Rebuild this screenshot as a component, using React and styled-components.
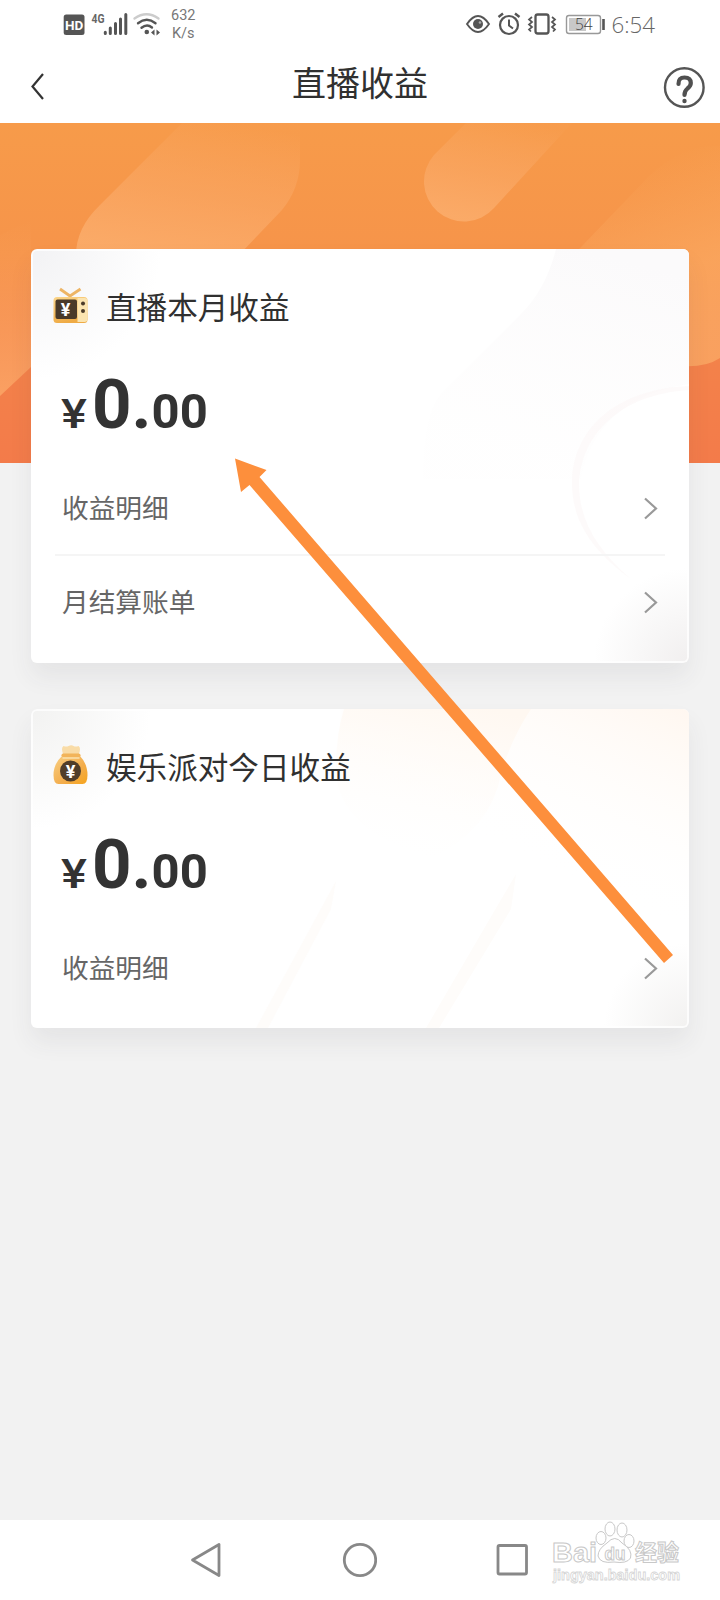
import styled, { createGlobalStyle } from "styled-components";

const GlobalStyle = createGlobalStyle`
  * {
    box-sizing: border-box;
  }
  body {
    margin: 0;
    background: #f2f2f2;
    font-family: Roboto, "Noto Sans CJK SC", sans-serif;
  }
  svg {
    display: block;
    flex: none;
  }
`;

const Page = styled.div`
  position: relative;
  width: 720px;
  height: 1600px;
  overflow: hidden;
  display: flex;
  flex-direction: column;
  background: #f2f2f2;
`;

const StatusBar = styled.div`
  height: 50px;
  flex: none;
  display: flex;
  justify-content: space-between;
  background: #fff;
  padding: 0 65px 0 62px;
`;

const StatusGroup = styled.div`
  display: flex;
  align-items: center;
  height: 48px;
`;

const Speed = styled.div`
  margin-left: 5px;
  padding-top: 1px;
  font-size: 14.5px;
  line-height: 18px;
  text-align: center;
  color: #777;
`;

const Clock = styled.div`
  font-family: "Open Sans", sans-serif;
  font-weight: 300;
  font-size: 22.3px;
  line-height: 48px;
  color: #666;
  margin-left: 5px;
  padding-top: 1px;
`;

const Header = styled.header`
  height: 73px;
  flex: none;
  display: grid;
  grid-template-columns: 60px 1fr 60px;
  align-items: center;
  background: #fff;
`;

const Title = styled.h1`
  margin: 0;
  padding-bottom: 6px;
  text-align: center;
  font-size: 34px;
  line-height: 50px;
  font-weight: 400;
  color: #303030;
`;

const Banner = styled.div`
  height: 340px;
  flex: none;
  background: linear-gradient(#f79b4a, #f6944a 38%, #f3814a 72%, #f37b4a);
`;

const Cards = styled.main`
  flex: 1;
  display: flex;
  flex-direction: column;
  gap: 46px;
  margin-top: -214px;
  padding: 0 31px;
`;

const CardBox = styled.section`
  position: relative;
  flex: none;
  height: ${(p) => p.$height}px;
  padding: 31px 24px 0 22px;
  overflow: hidden;
  border-radius: 6px;
  background: ${(p) => p.$bg};
  box-shadow: inset 0 0 0 2px rgba(255, 255, 255, 0.75);
`;

const Shadow = styled.div`
  flex: none;
  border-radius: 6px;
  box-shadow: 0 14px 24px rgba(60, 60, 70, 0.07);
`;

const CardArt = styled.svg`
  position: absolute;
  top: 0;
  left: 0;
`;

const CardInner = styled.div`
  position: relative;
`;

const CardTitle = styled.div`
  display: flex;
  align-items: center;
  height: 54px;
  gap: 18px;
  font-size: 30.6px;
  line-height: 54px;
  color: #303030;

  span {
    padding-top: 4px;
  }
`;

const Amount = styled.div`
  display: flex;
  align-items: baseline;
  height: 80px;
  margin-top: 31px;
  padding-left: 8px;
  line-height: 80px;
  font-weight: 700;
  color: #333;
`;

const Yen = styled.span`
  width: 31px;
  font-weight: 500;
  font-size: 40px;
  line-height: 1;
  transform: scaleX(1.22);
  transform-origin: left;
`;

const Whole = styled.span`
  font-size: 69px;
`;

const Cents = styled.span`
  font-size: 49px;
`;

const Row = styled.div`
  display: flex;
  align-items: center;
  justify-content: space-between;
  height: 94px;
  margin-left: 2px;
  padding: 0 7px;
  font-size: 26.7px;
  color: #666;
  border-top: 2px solid ${(p) => (p.$line ? "#f5f5f5" : "transparent")};

  span {
    padding-bottom: 4px;
  }
`;

const Rows = styled.div`
  margin-top: 15px;
`;

const NavBar = styled.nav`
  height: 80px;
  flex: none;
  display: flex;
  justify-content: space-between;
  align-items: center;
  padding: 0 190px 0 188px;
  background: #fff;
`;

const Pointer = styled.svg`
  position: absolute;
  left: 230px;
  top: 450px;
`;

const Watermark = styled.svg`
  position: absolute;
  left: 548px;
  top: 1518px;
`;

function StatusLeft() {
  return (
    <StatusGroup>
      <svg width="104" height="48" viewBox="62 0 104 48">
        <rect x="63.7" y="14.5" width="20.8" height="20.5" rx="2.5" fill="#555" />
        <text x="74.1" y="30" textAnchor="middle" fontFamily="Roboto" fontWeight="700" fontSize="13.5" fill="#fff">
          HD
        </text>
        <text x="91.5" y="23" fontFamily="Roboto" fontWeight="700" fontSize="12" textLength="13" lengthAdjust="spacingAndGlyphs" fill="#666">
          4G
        </text>
        <g stroke="#555" strokeWidth="3" strokeLinecap="round">
          <path d="M105.3 32.3v1.2M110.3 28v5.5M115.5 23.5v10M120.5 19v14.5M125.8 14.5v19" />
        </g>
        <g fill="none" strokeLinecap="round" strokeWidth="2.4">
          <path d="M134.5 18.5Q146.5 10 158.5 18.5" stroke="#ccc" />
          <path d="M138 23.2Q146.8 16.5 155.5 23.2" stroke="#555" />
          <path d="M141.5 27.8Q147 23.3 152 27.5" stroke="#555" />
        </g>
        <circle cx="146.8" cy="32" r="2.3" fill="#555" />
        <path d="M154.5 29.5v6l-3.5-3zM156.5 29.5v6l3.5-3z" fill="#555" />
      </svg>
      <Speed>
        632
        <br />
        K/s
      </Speed>
    </StatusGroup>
  );
}

function StatusRight() {
  return (
    <StatusGroup>
      <svg width="142" height="48" viewBox="465 0 142 48">
        <g fill="none" stroke="#555" strokeWidth="1.9">
          <path d="M467 24Q478 8 489 24Q478 40 467 24z" />
          <circle cx="509" cy="25" r="9" strokeWidth="2.2" />
          <path d="M509 19.5v6l4 3" strokeWidth="2" />
          <path d="M498.5 17l4.5-3.5M515 13.5l4.5 3.5" strokeWidth="2.4" />
          <rect x="535.5" y="14.5" width="13" height="19" rx="2.2" strokeWidth="2.3" />
          <path d="M532 17l-3 2.5 3 2.5-3 2.5 3 2.5-3 2.5 2 2M552 17l3 2.5-3 2.5 3 2.5-3 2.5 3 2.5-2 2" strokeWidth="1.7" />
        </g>
        <circle cx="478" cy="24" r="5" fill="#555" />
        <circle cx="480" cy="22.5" r="1.3" fill="#aaa" />
        <rect x="566.5" y="15.5" width="34" height="18" rx="2.5" fill="#fff" stroke="#999" strokeWidth="1.4" />
        <rect x="569" y="18" width="17" height="13" fill="#c8c8c8" />
        <path d="M603.5 19v11" stroke="#555" strokeWidth="2.6" />
        <text x="583.8" y="30" textAnchor="middle" fontFamily="Open Sans" fontWeight="300" fontSize="15.5" fill="#444">
          54
        </text>
      </svg>
      <Clock>6:54</Clock>
    </StatusGroup>
  );
}

function BannerArt() {
  return (
    <svg width="720" height="340" viewBox="0 123 720 340">
      <defs>
        <linearGradient id="stripA" x1="0.7" y1="0" x2="0.4" y2="1">
          <stop offset="0" stopColor="#fbb274" stopOpacity="0.05" />
          <stop offset="0.55" stopColor="#fbad6d" stopOpacity="0.5" />
          <stop offset="1" stopColor="#fbac6a" stopOpacity="0.9" />
        </linearGradient>
        <linearGradient id="stripC" x1="0.3" y1="0" x2="0.6" y2="1">
          <stop offset="0.15" stopColor="#fbac62" stopOpacity="0" />
          <stop offset="0.65" stopColor="#fbaa62" stopOpacity="0.7" />
          <stop offset="1" stopColor="#f9a260" stopOpacity="0.95" />
        </linearGradient>
        <linearGradient id="stripD" x1="0" y1="0" x2="0" y2="1">
          <stop offset="0" stopColor="#fba660" stopOpacity="0" />
          <stop offset="1" stopColor="#fba465" stopOpacity="0.9" />
        </linearGradient>
      </defs>
      <path d="M182 123L100 205Q76 228 76 255H239L282 210Q300 188 300 160V123z" fill="url(#stripA)" />
      <path d="M466 123L434 155A40 40 0 0 0 494 208L572 123z" fill="url(#stripA)" />
      <path d="M540 290L650 175Q685 143 720 146V358Q705 368 680 366L540 360z" fill="url(#stripC)" />
      <path d="M0 235L31 220V367L0 396z" fill="url(#stripD)" />
    </svg>
  );
}

function TvIcon() {
  return (
    <svg width="35" height="54" viewBox="0 0 34 54">
      <defs>
        <linearGradient id="tvBody" x1="0" y1="0" x2="0.3" y2="1">
          <stop offset="0" stopColor="#fbd58a" />
          <stop offset="1" stopColor="#efab45" />
        </linearGradient>
      </defs>
      <path d="M6.5 9L16.5 16L27 9" fill="none" stroke="#edb566" strokeWidth="2.8" />
      <rect x="0" y="17" width="34" height="26" rx="3.5" fill="url(#tvBody)" />
      <path d="M24 18h7q3 0 3 3v18q0 3-3 3h-7z" fill="#fbe4b0" />
      <rect x="2" y="19.5" width="21.5" height="19.5" rx="2" fill="#4a3a29" />
      <circle cx="29.5" cy="23.5" r="2" fill="#4a3a29" />
      <circle cx="29.5" cy="31" r="2" fill="#4a3a29" />
      <text x="12" y="35.5" textAnchor="middle" fontFamily="Roboto" fontWeight="700" fontSize="18" fill="#fff">
        ¥
      </text>
    </svg>
  );
}

function BagIcon() {
  return (
    <svg width="35" height="54" viewBox="0 -1 34 54">
      <defs>
        <linearGradient id="bagBody" x1="0" y1="0" x2="1" y2="1">
          <stop offset="0" stopColor="#f8cf83" />
          <stop offset="0.6" stopColor="#f3ad4c" />
          <stop offset="1" stopColor="#f6a41c" />
        </linearGradient>
      </defs>
      <path d="M10 14Q7 7 10 5Q13 6 15 5Q18 3.5 20 5Q22 6 25 5Q28 7 25 14z" fill="#f9dca7" />
      <path d="M8.5 15H26.5Q34 23 34 34Q34 43 29 43H5Q0 43 0 34Q0 23 8.5 15z" fill="url(#bagBody)" />
      <rect x="8" y="12.5" width="19" height="3.5" rx="1.7" fill="#f2b45a" />
      <path d="M9 17h17" stroke="#fae0ad" strokeWidth="1.4" />
      <circle cx="17" cy="30" r="10.5" fill="#503d29" />
      <text x="17" y="36.5" textAnchor="middle" fontFamily="Roboto" fontWeight="700" fontSize="18" fill="#fff">
        ¥
      </text>
    </svg>
  );
}

function MoneyRow({ label, line }) {
  return (
    <Row $line={line}>
      <span>{label}</span>
      <svg width="15" height="24" viewBox="0 0 15 24">
        <path d="M2 2.5L13 12.5L2 22.5" fill="none" stroke="#999" strokeWidth="2.2" />
      </svg>
    </Row>
  );
}

function Card({ height, bg, art, icon, title, rows }) {
  return (
    <Shadow>
      <CardBox $height={height} $bg={bg}>
        {art}
        <CardInner>
          <CardTitle>
            {icon}
            <span>{title}</span>
          </CardTitle>
          <Amount>
            <Yen>¥</Yen>
            <Whole>0.</Whole>
            <Cents>00</Cents>
          </Amount>
          <Rows>
            {rows.map((label, i) => (
              <MoneyRow key={label} label={label} line={i > 0} />
            ))}
          </Rows>
        </CardInner>
      </CardBox>
    </Shadow>
  );
}

function MonthArt() {
  return (
    <CardArt width="658" height="414" viewBox="0 0 658 414">
      <defs>
        <linearGradient id="haze" x1="0.6" y1="0" x2="0.3" y2="1">
          <stop offset="0" stopColor="#fbfafb" />
          <stop offset="0.9" stopColor="#fdfcfc" stopOpacity="0.2" />
        </linearGradient>
      </defs>
      <path d="M525 0Q515 40 490 65L410 145Q392 165 392 230L550 230Q565 150 658 135V0z" fill="url(#haze)" />
      <path d="M658 137C585 140 541 180 541 235C541 275 565 305 600 330C565 300 548 270 548 235C550 185 590 145 658 141z" fill="#fcf7f6" opacity="0.6" />
    </CardArt>
  );
}

function TodayArt() {
  return (
    <CardArt width="658" height="319" viewBox="0 0 658 319">
      <defs>
        <linearGradient id="warm" x1="1" y1="0" x2="0.3" y2="0.9">
          <stop offset="0" stopColor="#fff7f0" />
          <stop offset="0.75" stopColor="#fff" stopOpacity="0" />
        </linearGradient>
        <linearGradient id="warmTop" x1="0.8" y1="0" x2="0.5" y2="1">
          <stop offset="0" stopColor="#fff8f1" />
          <stop offset="1" stopColor="#fffdfb" stopOpacity="0" />
        </linearGradient>
      </defs>
      <path d="M310 0H658V210H420Q305 160 305 60z" fill="url(#warm)" />
      <path d="M500 0Q480 30 470 65Q460 120 400 150Q305 120 305 60Q305 25 313 0z" fill="url(#warmTop)" />
      <path d="M305 172L225 319H237L300 200z" fill="#fefcfa" />
      <path d="M485 165L395 319H408L480 200z" fill="#fefcfa" />
    </CardArt>
  );
}

function App() {
  return (
    <Page>
      <GlobalStyle />
      <StatusBar>
        <StatusLeft />
        <StatusRight />
      </StatusBar>
      <Header>
        <svg width="60" height="73" viewBox="0 50 60 73">
          <path d="M43 74L32.5 86.5L43 99" fill="none" stroke="#333" strokeWidth="2.2" />
        </svg>
        <Title>直播收益</Title>
        <svg width="60" height="73" viewBox="660 50 60 73">
          <circle cx="684.3" cy="87.5" r="19.3" fill="none" stroke="#555" strokeWidth="2.4" />
          <path d="M678.5 84Q678.3 77.5 684.5 77.5Q690.8 77.5 690.8 83Q690.8 86 687.5 88.500Q684.5 91 684.5 95" fill="none" stroke="#505050" strokeWidth="4.2" strokeLinecap="round" />
          <circle cx="684.5" cy="101" r="2.2" fill="#505050" />
        </svg>
      </Header>
      <Banner>
        <BannerArt />
      </Banner>
      <Cards>
        <Card
          height={414}
          bg="radial-gradient(circle at 0 0, #f2f2f4, rgba(255,255,255,0) 130px), radial-gradient(circle at 100% 100%, #f1efef, rgba(255,255,255,0) 95px), #fff"
          art={<MonthArt />}
          icon={<TvIcon />}
          title="直播本月收益"
          rows={["收益明细", "月结算账单"]}
        />
        <Card
          height={319}
          bg="radial-gradient(circle at 0 0, #f2f2f1, rgba(255,255,255,0) 120px), radial-gradient(circle at 100% 100%, #f2f1f0, rgba(255,255,255,0) 85px), #fff"
          art={<TodayArt />}
          icon={<BagIcon />}
          title="娱乐派对今日收益"
          rows={["收益明细"]}
        />
      </Cards>
      <NavBar>
        <svg width="36" height="40" viewBox="0 0 36 40">
          <path d="M4.5 20L31 4.5V35.5z" fill="none" stroke="#888" strokeWidth="2.8" strokeLinejoin="round" />
        </svg>
        <svg width="36" height="40" viewBox="0 0 36 40">
          <circle cx="19" cy="20" r="15.7" fill="none" stroke="#888" strokeWidth="2.8" />
        </svg>
        <svg width="36" height="40" viewBox="0 0 36 40">
          <rect x="4" y="5.5" width="28.5" height="28.5" rx="1.5" fill="none" stroke="#888" strokeWidth="2.8" />
        </svg>
      </NavBar>
      <Pointer width="450" height="520" viewBox="230 450 450 520">
        <path d="M235 458.5L266.5 470L259.5 477L673 955L664 963L249.5 485L241 492z" fill="#fd8f3c" />
      </Pointer>
      <Watermark width="140" height="70" viewBox="548 1518 140 70">
        <g fill="#fff" stroke="#c8c8c8" strokeWidth="1" fontFamily="Liberation Sans">
          <text x="552" y="1561.5" fontSize="28" fontWeight="700" textLength="45" lengthAdjust="spacingAndGlyphs">
            Bai
          </text>
          <ellipse cx="601" cy="1538" rx="5" ry="6.5" />
          <ellipse cx="610" cy="1529" rx="5" ry="7" />
          <ellipse cx="622" cy="1530" rx="5" ry="7" />
          <ellipse cx="629" cy="1541" rx="5" ry="6.5" />
          <path d="M607 1543Q615 1534 622 1543Q633 1550 630.5 1558Q627 1564 614 1562Q600 1564 598 1556Q598 1549 607 1543z" />
          <text x="604.5" y="1559.5" fontSize="18" fontWeight="700" textLength="21" lengthAdjust="spacingAndGlyphs">
            du
          </text>
          <text x="635" y="1560" fontSize="22" fontWeight="700" fontFamily="Noto Sans CJK SC">
            经验
          </text>
          <text x="553" y="1580" fontSize="14" fontWeight="700" textLength="127" lengthAdjust="spacingAndGlyphs" strokeWidth="0.8" stroke="#d6d6d6">
            jingyan.baidu.com
          </text>
        </g>
      </Watermark>
    </Page>
  );
}

export default App;
